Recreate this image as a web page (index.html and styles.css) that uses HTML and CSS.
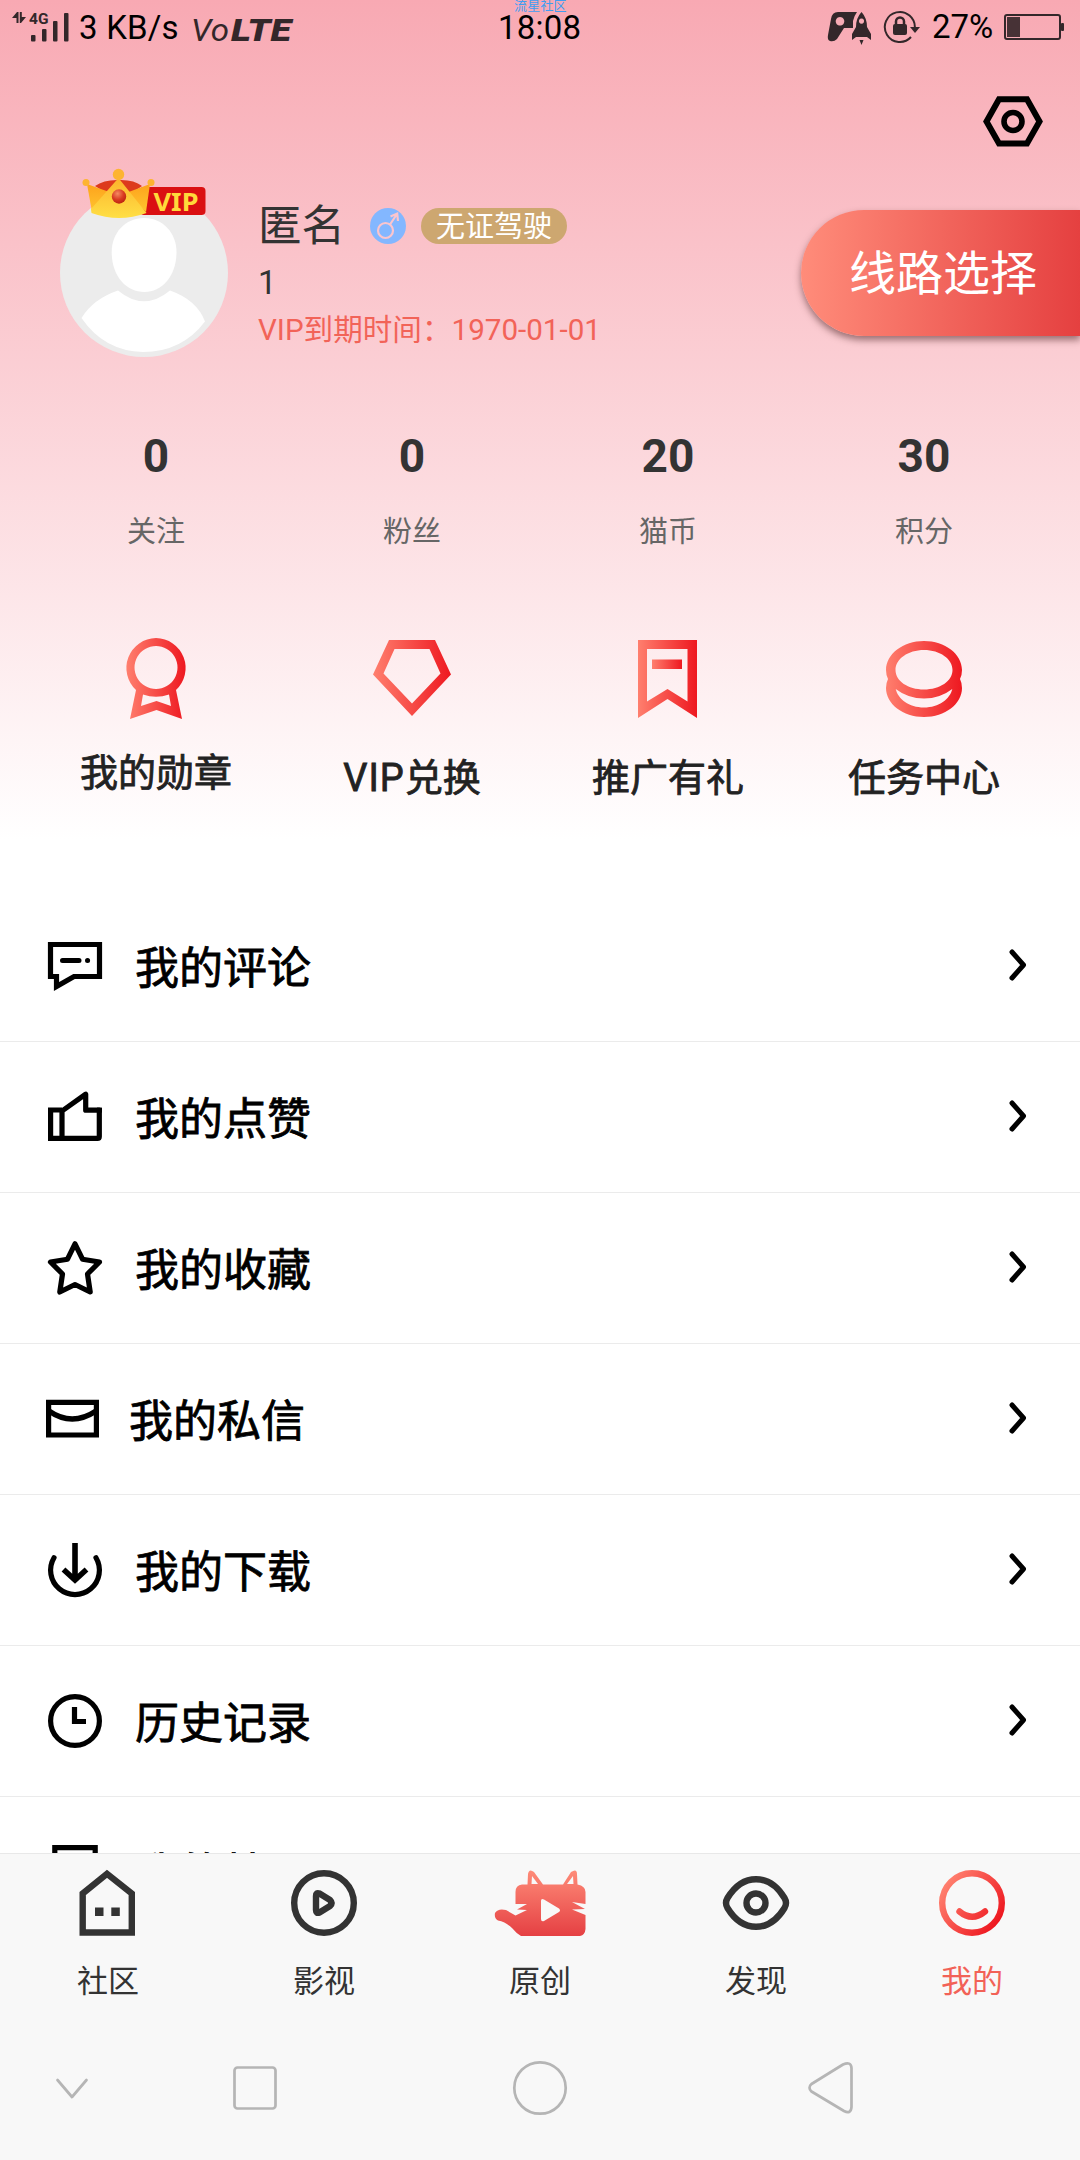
FILE: index.html
```html
<!DOCTYPE html>
<html lang="zh-CN">
<head>
<meta charset="utf-8">
<title>我的</title>
<link rel="stylesheet" href="styles.css">
</head>
<body>
<svg width="0" height="0" class="defs">
  <defs>
    <linearGradient id="red" x1="0" x2="1" y1="0" y2="0"><stop offset="0" stop-color="#ff7f6e"/><stop offset="1" stop-color="#ee1820"/></linearGradient>
    <linearGradient id="redDiag" gradientUnits="userSpaceOnUse" x1="945" x2="998" y1="1885" y2="1922"><stop offset="0" stop-color="#ff7f6e"/><stop offset="1" stop-color="#ee1820"/></linearGradient>
    <linearGradient id="cat" x1="0" x2="0" y1="0" y2="1"><stop offset="0" stop-color="#fe8b78"/><stop offset="1" stop-color="#e54043"/></linearGradient>
    <linearGradient id="gold" x1="0" x2="0" y1="0" y2="1"><stop offset="0" stop-color="#fcb32c"/><stop offset="1" stop-color="#ffdf45"/></linearGradient>
    <linearGradient id="goldSide" x1="0" x2="0" y1="0" y2="1"><stop offset="0" stop-color="#fda21c"/><stop offset="1" stop-color="#ffc52f"/></linearGradient>
    <radialGradient id="gem" cx="0.4" cy="0.3" r="0.7"><stop offset="0" stop-color="#f58a62"/><stop offset="0.6" stop-color="#d93a22"/><stop offset="1" stop-color="#bd2410"/></radialGradient>
  </defs>
</svg>
<div class="page">
  <main class="content">
    <header class="status">
      <svg class="signal" viewBox="12 10 58 34" width="58" height="34">
        <g fill="#33272a"><path d="M12 18l5-6h1.500v11h-2v-5z"/><path d="M26 17l-5 6h-1.200v-11h2v5z"/>
        <rect x="31" y="35" width="4.500" height="6.500" rx="1"/><rect x="42" y="29" width="4.500" height="12.500" rx="1"/><rect x="53" y="21" width="4.500" height="20.500" rx="1"/><rect x="64" y="13" width="4.500" height="28.500" rx="1"/></g>
        <text x="29" y="24" class="net">4G</text>
      </svg>
      <span class="speed">3 KB/s</span>
      <svg class="volte" viewBox="191 12 104 34" width="104" height="34"><text x="191" y="40.500" textLength="38" lengthAdjust="spacingAndGlyphs">Vo</text><text x="231" y="40.500" class="heavy" textLength="60" lengthAdjust="spacingAndGlyphs">LTE</text></svg>
      <span class="clock"><small>流星社区</small>18:08</span>
      <svg class="game" viewBox="827 10 46 36" width="46" height="36">
        <path fill="#33272a" fill-rule="evenodd" d="M838 12H857Q854 16 853 21L853 28H844L837 39Q834 42 830 41Q827 40 828 35L831 19Q832 12 838 12ZM840 17a4.300 4.300 0 1 0 .01 0z"/>
        <path fill="#33272a" fill-rule="evenodd" d="M861.500 12Q867 18 867 27L871 34V40L867 37H856L852 40V34L856 27Q856 18 861.500 12ZM861.500 18.500a2.600 2.600 0 1 0 .01 0zM859.500 40H863.500L861.500 45Z"/>
      </svg>
      <svg class="lock" viewBox="883 9 38 36" width="38" height="36">
        <g fill="none" stroke="#33272a"><path stroke-width="2" d="M914.800 28A15 15 0 1 0 911 37"/><path stroke-width="2.500" d="M896 26v-4.500a4 4 0 0 1 8 0V26"/></g>
        <rect x="893" y="24" width="14" height="11" rx="2" fill="#33272a"/><path d="M910 27h10l-5 6z" fill="#33272a"/>
      </svg>
      <span class="percent">27%</span>
      <svg class="battery" viewBox="1003 12 62 30" width="62" height="30"><rect x="1005" y="15" width="55" height="24" rx="2" fill="none" stroke="#33272a" stroke-width="2"/><rect x="1007" y="17" width="13" height="20" fill="#473236"/><rect x="1061" y="23" width="3" height="8" rx="1" fill="#33272a"/></svg>
    </header>

    <div class="toolbar">
      <svg viewBox="982 95 62 52" width="62" height="52"><path d="M999 99.300h28L1039.500 121.500 1027 143.400h-28L986.500 121.500z" fill="none" stroke="#000" stroke-width="6"/><circle cx="1013" cy="121.500" r="9" fill="none" stroke="#000" stroke-width="5.600"/></svg>
    </div>

    <section class="profile">
      <svg class="avatar" viewBox="60 167 168 190" width="168" height="190">
        <circle cx="144" cy="273" r="84" fill="#ececec"/>
        <path fill="#fff" d="M144.200 218C163 218 176.500 233 176.500 252C176.500 276 162 292 144.500 292C126 292 111.700 276 111.700 252C111.700 233 125 218 144.200 218Z"/>
        <path fill="#fff" d="M118 290.500Q144 312 170 290.500Q197 300 205 321.500Q182 352 143 352Q104 351 81.500 318Q93 299 118 290.500Z"/>
        <rect x="140" y="187" width="65.500" height="28" rx="4" fill="#da1012"/>
        <text x="153.500" y="210.500" class="vip-tag" textLength="45" lengthAdjust="spacingAndGlyphs">VIP</text>
        <path d="M95 186Q104 179.500 119 180Q134 179.500 142 186L132 193H106Z" fill="#dd3a1d"/>
        <path d="M87 184L112 193L92 212Z" fill="url(#goldSide)"/><path d="M150 184L126 193L146 212Z" fill="url(#goldSide)"/>
        <path d="M118.500 178L146.500 213Q119 223 91.500 213L91 209Z" fill="url(#gold)"/>
        <circle cx="118.500" cy="174.500" r="5.700" fill="#fdb431"/><circle cx="86" cy="182.500" r="3.500" fill="#fdb431"/><circle cx="151" cy="182.500" r="3.500" fill="#fdb431"/>
        <circle cx="119" cy="196.500" r="7.200" fill="url(#gem)"/>
      </svg>
      <div class="who">
        <div class="name-line">
          <span class="name">匿名</span>
          <svg class="sex" viewBox="370 208 36 36" width="36" height="36"><circle cx="388" cy="226" r="18" fill="#83b7ff"/><g fill="none" stroke="#fbc5cd" stroke-width="2.200"><circle cx="385.500" cy="230.500" r="7.500"/><path d="M390 224.500L397 214M390.500 216.500L397.200 213.500 398 221"/></g></svg>
          <span class="rank">无证驾驶</span>
        </div>
        <div class="uid">1</div>
        <div class="expiry">VIP到期时间：1970-01-01</div>
      </div>
      <div class="route">线路选择</div>
    </section>

    <section class="stats">
      <div><b>0</b><span>关注</span></div>
      <div><b>0</b><span>粉丝</span></div>
      <div><b>20</b><span>猫币</span></div>
      <div><b>30</b><span>积分</span></div>
    </section>

    <section class="shortcuts">
      <div class="raised">
        <svg viewBox="116 637 80 84" width="80" height="84"><path fill="url(#red)" fill-rule="evenodd" d="M156 638A30 30 0 0 1 176 690L182 719L156.500 710L130 719L136 690A30 30 0 0 1 156 638ZM156 646a21.500 21.500 0 1 0 .01 0ZM143 694.500L141 706L156.500 701L171 706L169 694.500Q156 699 143 694.500Z"/></svg>
        <span>我的勋章</span></div>
      <div>
        <svg viewBox="372 637 80 84" width="80" height="84"><path fill="url(#red)" fill-rule="evenodd" d="M389 640H435L451 674.500L412 716L373 674.500ZM394.500 649L383.500 673.500L412 703.500L440.500 673.500L429.500 649Z"/></svg>
        <span><i>VIP</i>兑换</span></div>
      <div>
        <svg viewBox="628 637 80 84" width="80" height="84"><path fill="url(#red)" fill-rule="evenodd" d="M638 640H697V718L667.500 699L638 718ZM647 649V701.500L667.500 689L687.500 701.500V649Z"/><rect x="652" y="659.500" width="30" height="9.500" fill="url(#red)"/></svg>
        <span>推广有礼</span></div>
      <div>
        <svg viewBox="884 637 80 84" width="80" height="84"><path fill="url(#red)" fill-rule="evenodd" d="M924 641C945 641 962 654 962 670Q962 675 960 679Q962 683 962 688C962 704 945 717 924 717C903 717 886 704 886 688Q886 683 888 679Q886 675 886 670C886 654 903 641 924 641ZM924 650C908 650 895.500 659 895.500 670C895.500 681 908 689.500 924 689.500C940 689.500 952.500 681 952.500 670C952.500 659 940 650 924 650ZM895.700 689C898 699 909 707.500 924 707.500C939 707.500 950 699 952.300 689Q940 698.500 924 698.500Q908 698.500 895.700 689Z"/></svg>
        <span>任务中心</span></div>
    </section>

    <ul class="menu">
      <li><svg class="ico" viewBox="45 936 60 60" width="60" height="60"><path fill="none" stroke="#000" stroke-width="5.200" d="M50.500 944.500H99.500V976.500H74L56.500 986.500V976.500H50.500Z" stroke-linejoin="miter"/><path stroke="#000" stroke-width="5" stroke-linecap="round" d="M62.500 960.500H79M87.500 960.500h.1"/></svg><span>我的评论</span><svg class="go" viewBox="0 0 24 40" width="24" height="40"><path d="M5 6L16.500 19L5 32"/></svg></li>
      <li><svg class="ico" viewBox="45 1087 60 60" width="60" height="60"><g fill="none" stroke="#000" stroke-width="5.200" stroke-linejoin="round"><path stroke-linejoin="miter" d="M62 1110H50.600V1138.400H62"/><path d="M62 1138.400V1111L85.700 1094.200V1110.200H99.300V1136.500Q99.300 1138.400 97.400 1138.400Z"/></g><path d="M97 1107.600h5v5h-5z"/></svg><span>我的点赞</span><svg class="go" viewBox="0 0 24 40" width="24" height="40"><path d="M5 6L16.500 19L5 32"/></svg></li>
      <li><svg class="ico" viewBox="45 1238 60 60" width="60" height="60"><path fill="none" stroke="#000" stroke-width="5.200" stroke-linejoin="round" d="M75 1243.800L82.500 1259.200L99.500 1262L87.500 1274L90.200 1292L75 1284.500L59.800 1292L62.500 1274L50.500 1262L67.500 1259.200Z"/></svg><span>我的收藏</span><svg class="go" viewBox="0 0 24 40" width="24" height="40"><path d="M5 6L16.500 19L5 32"/></svg></li>
      <li class="mail"><svg class="ico" viewBox="43 1389 60 60" width="60" height="60"><g fill="none" stroke="#000" stroke-width="5.200"><path d="M48.600 1402.300H96.400V1435H48.600Z"/><path d="M49 1411Q72 1427 96 1411"/></g></svg><span>我的私信</span><svg class="go" viewBox="0 0 24 40" width="24" height="40"><path d="M5 6L16.500 19L5 32"/></svg></li>
      <li><svg class="ico" viewBox="45 1540 60 60" width="60" height="60"><g fill="none" stroke="#000" stroke-width="5.200"><path stroke-linecap="round" d="M54 1557.800A24.400 24.400 0 1 0 96 1557.800"/><path stroke-width="5.600" d="M75 1543V1580M63.500 1569.500L75 1580L86.500 1569.500"/></g></svg><span>我的下载</span><svg class="go" viewBox="0 0 24 40" width="24" height="40"><path d="M5 6L16.500 19L5 32"/></svg></li>
      <li><svg class="ico" viewBox="45 1691 60 60" width="60" height="60"><g fill="none" stroke="#000" stroke-width="5.200"><circle cx="75" cy="1721" r="24.400"/><path d="M74.500 1707V1721.500H86"/></g></svg><span>历史记录</span><svg class="go" viewBox="0 0 24 40" width="24" height="40"><path d="M5 6L16.500 19L5 32"/></svg></li>
      <li><svg class="ico" viewBox="45 1842 60 60" width="60" height="60"><path fill="none" stroke="#000" stroke-width="5.200" d="M54.800 1847.600H95.200V1896H54.800Z"/></svg><span>我的帖子</span><svg class="go" viewBox="0 0 24 40" width="24" height="40"><path d="M5 6L16.500 19L5 32"/></svg></li>
    </ul>
  </main>

  <nav class="tabs">
    <div><svg viewBox="74 1869 68 68" width="68" height="68"><path fill="none" stroke="#333" stroke-width="6.400" d="M82.700 1893.500L107 1873.800L131.800 1893.500V1932.500H82.700Z"/><path fill="#333" d="M95 1907.500h8.500v8.500h-8.500zM111.300 1907.500h8.500v8.500h-8.500z"/></svg><span>社区</span></div>
    <div><svg viewBox="290 1869 68 68" width="68" height="68"><g fill="none" stroke="#333" stroke-width="6.400"><circle cx="324" cy="1903" r="29.800"/><path stroke-linejoin="round" d="M316 1896Q316 1892 319.500 1893.500L330 1900Q333 1903 330 1906L319.500 1912.500Q316 1914 316 1910Z"/></g></svg><span>影视</span></div>
    <div><svg viewBox="494 1869 92 68" width="92" height="68"><g fill="url(#cat)"><path d="M515.500 1892Q515.500 1885 522 1884.500H527.500L528 1874Q529 1868 534 1872L543 1884.500H563L571 1872Q577 1868 577 1874L577.500 1884.500Q585.500 1886 585.500 1892V1904L572 1902L585 1909L572 1909.500L585.500 1915V1929Q585 1935 580 1936H521Q516 1933 512 1928Q506 1922 498 1920.500Q494 1918 495 1913Q498 1908 506 1910L515.500 1915.500L527 1910L517 1909.500L527 1904L515.500 1904Z"/></g><path fill="#f8f8f8" d="M532 1876L538 1884H531.500ZM573 1876L567 1884H573.500ZM541 1901Q541 1898 544 1899.500L559 1908.500Q561 1910.500 559 1912L544 1921Q541 1922 541 1919Z"/></svg><span>原创</span></div>
    <div><svg viewBox="722 1869 68 68" width="68" height="68"><g fill="none" stroke="#333" stroke-width="6.400"><path stroke-linejoin="round" d="M756 1879.200C770 1879.200 779 1889 784.500 1898Q787.500 1903 784.500 1908C779 1917 770 1926.800 756 1926.800C742 1926.800 733 1917 727.500 1908Q724.500 1903 727.500 1898C733 1889 742 1879.200 756 1879.200Z"/><circle cx="756" cy="1903" r="9.500"/></g></svg><span>发现</span></div>
    <div class="active"><svg viewBox="938 1869 68 68" width="68" height="68"><g fill="none" stroke="url(#redDiag)" stroke-width="6.400"><circle cx="972" cy="1903" r="29.800"/><path stroke-linecap="round" d="M959.500 1911.500Q972 1922 985 1911.500"/></g></svg><span>我的</span></div>
  </nav>

  <footer class="sysnav">
    <svg viewBox="54 2058 36 60" width="36" height="60"><path d="M57.500 2080L72 2097L86.500 2080"/></svg>
    <svg viewBox="225 2058 60 60" width="60" height="60"><rect x="234.500" y="2067.500" width="41" height="41" rx="3"/></svg>
    <svg viewBox="510 2058 60 60" width="60" height="60"><circle cx="540" cy="2088" r="25.700"/></svg>
    <svg viewBox="800 2058 60 60" width="60" height="60"><path d="M843 2064.500Q851 2061 851.500 2068V2107Q851 2114.500 844 2111L811.500 2091.500Q807.500 2087.500 811.500 2084Z"/></svg>
  </footer>
</div>
</body>
</html>
```
FILE: styles.css
```css
* { box-sizing: border-box; margin: 0; padding: 0; }
body { width: 1080px; height: 2160px; overflow: hidden; background: #fff; font-family: Roboto, "Noto Sans CJK SC", sans-serif; color: #333; }
.defs { position: absolute; }
svg { display: block; flex: none; }
.page { display: flex; flex-direction: column; width: 1080px; height: 2160px; }
.content { height: 1853px; overflow: hidden; background: linear-gradient(#f8a9b3 0, #fff 840px) no-repeat; }

.status { display: flex; align-items: flex-start; height: 56px; padding: 10px 15px 0 12px; color: #000; font-size: 33px; line-height: 36px; white-space: nowrap; }
.net { font: bold 15.500px Roboto, sans-serif; fill: #33272a; }
.speed { width: 121px; padding-left: 9px; letter-spacing: .2px; }
.volte { margin: 2px 203px 0 0; font: italic 32px Roboto, sans-serif; fill: #33272a; }
.volte .heavy { font-weight: 900; }
.clock { position: relative; width: 329px; line-height: 36px; letter-spacing: .2px; }
.clock small { position: absolute; left: 16px; top: -12px; font-size: 13px; line-height: 16px; color: #3f9df2; }
.game { margin-right: 10px; }
.lock { margin: -1px 11px 0 0; }
.percent { width: 71px; line-height: 34px; }
.battery { margin-top: 2px; }

.toolbar { display: flex; justify-content: flex-end; height: 111px; padding: 39px 36px 0 0; }

.profile { display: flex; height: 233px; padding-left: 60px; }
.vip-tag { font: bold 25px "Noto Sans", sans-serif; fill: #ffd93b; }
.who { display: flex; flex-direction: column; width: 573px; padding: 33px 0 0 30px; }
.name-line { display: flex; align-items: center; height: 52px; }
.name { width: 112px; padding-top: 2px; font-size: 43.500px; line-height: 52px; }
.rank { width: 146px; height: 36px; margin-left: 15px; border-radius: 18px; background: #cda770; color: #fff; font-size: 29px; line-height: 38px; text-align: center; }
.uid { height: 46px; padding-top: 8px; font-size: 33px; line-height: 46px; }
.expiry { padding-top: 9px; color: #f26358; font-size: 29.600px; line-height: 46px; white-space: nowrap; }
.route { width: 279px; height: 126px; margin-top: 43px; padding-left: 48px; border-radius: 63px 0 0 63px; background: linear-gradient(90deg, #ff8c7a, #e54040 279px); color: #fff; font-size: 47px; line-height: 128px; box-shadow: 0 4px 7px rgba(60, 20, 20, .5); white-space: nowrap; }

.stats, .shortcuts { display: grid; grid-template-columns: repeat(4, 256px); padding: 0 28px; text-align: center; }
.stats { height: 237px; padding-top: 28px; }
.stats b, .stats span { display: block; }
.stats b { font-size: 46px; line-height: 56px; }
.stats span { margin-top: 26px; color: #666; font-size: 29px; line-height: 44px; }
.shortcuts, .menu li { font-weight: 400; -webkit-text-stroke-width: .8px; }
.shortcuts { height: 254px; color: #222; font-size: 38px; }
.shortcuts i { font-style: normal; letter-spacing: 1px; }
.shortcuts div { display: flex; flex-direction: column; align-items: center; }
.shortcuts span { margin-top: 32px; line-height: 50px; }
.shortcuts .raised span { margin-top: 27px; }

.menu { list-style: none; }
.menu li { display: flex; align-items: center; height: 151px; padding: 0 46px 1px 45px; border-bottom: 1px solid #ebebeb; color: #000; font-size: 44px; }
.menu span { flex: 1; margin-left: 30px; padding-top: 7px; line-height: 60px; }
.menu .mail { padding-left: 43px; }
.menu .mail span { margin-left: 26px; }
.go { margin-right: 3px; }
.go path { fill: none; stroke: #000; stroke-width: 5; stroke-linecap: round; stroke-linejoin: round; }

.tabs { display: grid; grid-template-columns: repeat(5, 216px); height: 167px; padding-top: 15px; border-top: 1px solid #e8e8e8; background: #f8f8f8; font-size: 31px; }
.tabs div { display: flex; flex-direction: column; align-items: center; }
.tabs span { margin-top: 24px; line-height: 42px; }
.tabs .active { color: #f26257; }
.sysnav { display: flex; height: 140px; padding: 38px 0 0 54px; background: #f8f8f8; }
.sysnav svg { fill: none; stroke: #b5b5b5; stroke-width: 2.700; stroke-linecap: round; stroke-linejoin: round; }
.sysnav svg:nth-child(2) { margin-left: 135px; }
.sysnav svg:nth-child(3) { margin-left: 225px; }
.sysnav svg:nth-child(4) { margin-left: 230px; }
```
